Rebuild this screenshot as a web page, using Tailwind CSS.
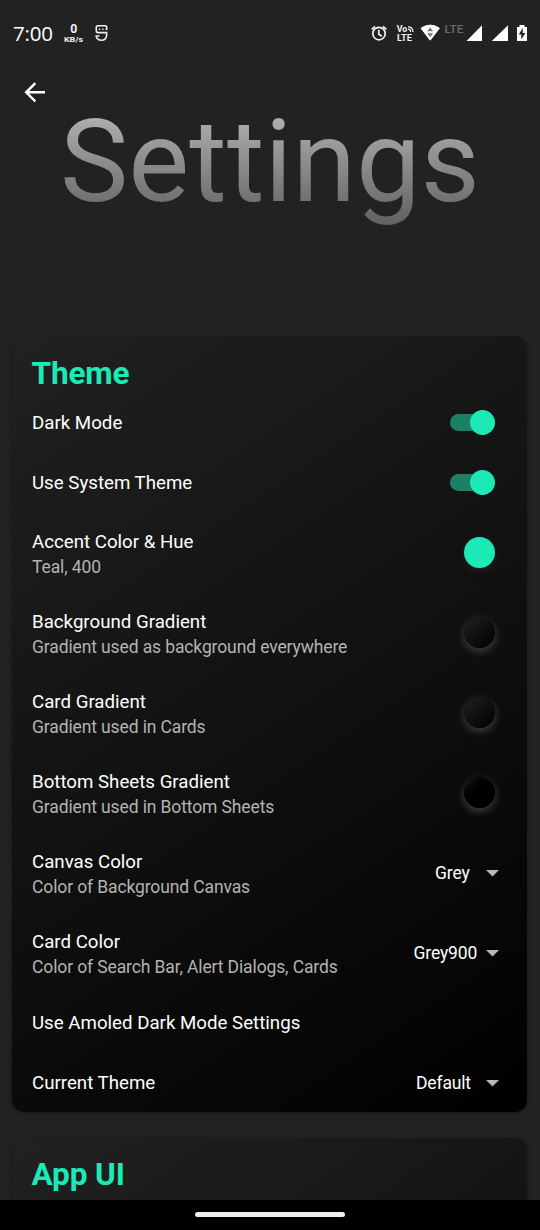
<!DOCTYPE html>
<html lang="en">
<head>
<meta charset="utf-8">
<title>Settings</title>
<script src="https://cdn.jsdelivr.net/npm/@tailwindcss/browser@4"></script>
</head>
<body class="bg-[#222222]">
<div class="w-[540px] h-[1230px] overflow-hidden flex flex-col bg-[#222222] text-white font-['Roboto',sans-serif]">
  <!-- Status bar -->
  <header class="h-[66px] shrink-0 flex items-center justify-between pl-[13px] pr-[12px]">
    <div class="flex items-center">
      <span class="w-[50px] text-[20.5px] leading-6 font-['Open_Sans',sans-serif] tracking-[-0.2px] whitespace-nowrap">7:00</span>
      <svg width="22" height="26" viewBox="0 -2 22 26" fill="#f4f4f4" font-family="Roboto" font-weight="700"><text x="7.2" y="10.8" font-size="12.5" textLength="7" lengthAdjust="spacingAndGlyphs">0</text><text x="1" y="20" font-size="7.6" textLength="19" lengthAdjust="spacingAndGlyphs">KB/s</text></svg>
      <svg class="ml-[10px]" width="13" height="18" viewBox="0 0 13 18" fill="none" stroke="#eee" stroke-width="1.6"><path d="M12.5 5.2H10.6M11.7 5.4V3.4Q11.7 1.8 9.9 1.8H3.1Q1.3 1.8 1.3 3.4V6.8Q1.3 8.6 3 8.6H11.6V11.6Q11 16.2 6.5 16.2Q2 16.2 1.3 12.4"/><path d="M3.8 5.2h1.4M7.2 5.2h1.4M.4 12H4.5"/></svg>
    </div>
    <svg width="159" height="24" viewBox="369 21 159 24" fill="none">
      <g stroke="#f2f2f2" stroke-width="1.7"><circle cx="379" cy="33.6" r="6.2"/><path d="M378.8 29.8v4.4l3 2M371.6 29.4l3.5-3M386.4 29.4l-3.5-3"/></g>
      <g fill="#f2f2f2" font-family="Roboto" font-weight="700" font-size="9"><text x="396.8" y="32" textLength="10.5" lengthAdjust="spacingAndGlyphs">Vo</text><text x="397" y="41" textLength="15" lengthAdjust="spacingAndGlyphs">LTE</text></g>
      <path d="M408 29.2q2.7 0 2.7 2.8M408 26.8q5 0 5 5.2" stroke="#f2f2f2" stroke-width="1.2"/>
      <path d="M421 28.2Q430.2 22 439.4 28.2L430.2 40.2Z" fill="#fff" stroke="#fff" stroke-linejoin="round"/>
      <path d="M427.2 31.2l3-3.8 3 3.8zM427.2 33.2l3 4 3-4z" fill="#777"/>
      <text x="444.5" y="33" fill="#6c6c6c" font-family="Roboto" font-weight="500" font-size="11" textLength="19" lengthAdjust="spacingAndGlyphs">LTE</text>
      <path d="M466.5 41L482 25.2V41ZM491.8 41L508 25.2V41Z" fill="#fff"/>
      <path d="M519.5 25h5v2h2.5v14h-10V27h2.5z" fill="#fff"/>
      <path d="M522.8 27.8l-4 6.8h2.5v5l4-6.7h-2.5z" fill="#222"/>
    </svg>
  </header>
  <!-- Title area -->
  <section class="h-[270px] shrink-0">
    <div class="h-[52px] pl-[23px] flex items-center"><svg width="24" height="24" viewBox="0 0 24 24" fill="none" stroke="#fff" stroke-width="2.5"><path d="M22 12.3H3.6M12.3 3.2L3.2 12.3L12.3 21.4"/></svg></div>
    <h1 class="-mt-[24px] h-[135px] leading-[135px] text-[115px] text-center whitespace-nowrap bg-linear-to-b from-[#c0c0c0] to-[#5e5e5e] bg-clip-text text-transparent">Settings</h1>
  </section>
  <main class="h-[864px] shrink-0 overflow-hidden pl-[12px] pr-[13px] flex flex-col gap-[26px]">
    <section class="h-[776px] shrink-0 rounded-[12px] bg-[linear-gradient(146.4deg,#212121,#000000)] shadow-[0_1px_4px_rgba(0,0,0,0.35)] px-[20px]">
      <h2 class="h-[56px] pt-[19px] -ml-[0.5px] leading-[38px] text-[31.5px] tracking-[-0.1px] font-bold text-[#1de9b6]">Theme</h2>
      <div class="h-[60px] flex items-center justify-between"><span class="pt-[2px] text-[18.7px]">Dark Mode</span>
        <span class="mr-[12px] w-[45px] h-[25px] flex items-center"><i class="w-[34px] h-[17px] rounded-full bg-[#1b8066]"></i><i class="-ml-[14px] size-[25px] shrink-0 rounded-full bg-[#1de9b6]"></i></span></div>
      <div class="h-[60px] flex items-center justify-between"><span class="pt-[2px] text-[18.7px]">Use System Theme</span>
        <span class="mr-[12px] w-[45px] h-[25px] flex items-center"><i class="w-[34px] h-[17px] rounded-full bg-[#1b8066]"></i><i class="-ml-[14px] size-[25px] shrink-0 rounded-full bg-[#1de9b6]"></i></span></div>
      <div class="h-[80px] flex items-center justify-between"><div class="pt-[5px] leading-[25px]"><p class="text-[18.7px]">Accent Color &amp; Hue</p><p class="text-[17.5px] tracking-[-0.12px] text-[#b3b3b3]">Teal, 400</p></div><i class="mt-px mr-[12px] size-[31.5px] rounded-full bg-[#1de9b6] shadow-[0_4px_7px_rgba(60,60,60,0.3)]"></i></div>
      <div class="h-[80px] flex items-center justify-between"><div class="pt-[5px] leading-[25px]"><p class="text-[18.7px]">Background Gradient</p><p class="text-[17.5px] tracking-[-0.12px] text-[#b3b3b3]">Gradient used as background everywhere</p></div><i class="mt-px mr-[12px] size-[31.5px] rounded-full bg-linear-to-br from-[#212121] to-[#030303] shadow-[0_3px_8px_#444444]"></i></div>
      <div class="h-[80px] flex items-center justify-between"><div class="pt-[5px] leading-[25px]"><p class="text-[18.7px]">Card Gradient</p><p class="text-[17.5px] tracking-[-0.12px] text-[#b3b3b3]">Gradient used in Cards</p></div><i class="mt-px mr-[12px] size-[31.5px] rounded-full bg-linear-to-br from-[#212121] to-[#030303] shadow-[0_3px_8px_#444444]"></i></div>
      <div class="h-[80px] flex items-center justify-between"><div class="pt-[5px] leading-[25px]"><p class="text-[18.7px]">Bottom Sheets Gradient</p><p class="text-[17.5px] tracking-[-0.12px] text-[#b3b3b3]">Gradient used in Bottom Sheets</p></div><i class="mt-px mr-[12px] size-[31.5px] rounded-full bg-linear-to-br from-[#212121] to-black to-55% shadow-[0_3px_8px_#444444]"></i></div>
      <div class="h-[80px] flex items-center justify-between"><div class="pt-[5px] leading-[25px]"><p class="text-[18.7px]">Canvas Color</p><p class="text-[17.5px] tracking-[-0.12px] text-[#b3b3b3]">Color of Background Canvas</p></div>
        <div class="mr-[8px] pt-[2px] flex items-center text-[17.5px] tracking-[-0.15px]"><span class="w-[51px]">Grey</span><svg width="13" height="7" viewBox="0 0 13 7"><path d="M0 0h13L6.5 6.5z" fill="#b8b8b8"/></svg></div></div>
      <div class="h-[80px] flex items-center justify-between"><div class="pt-[5px] leading-[25px]"><p class="text-[18.7px]">Card Color</p><p class="text-[17.5px] tracking-[-0.12px] text-[#b3b3b3]">Color of Search Bar, Alert Dialogs, Cards</p></div>
        <div class="mr-[8px] pt-[2px] flex items-center text-[17.5px] tracking-[-0.15px]"><span class="w-[72.5px]">Grey900</span><svg width="13" height="7" viewBox="0 0 13 7"><path d="M0 0h13L6.5 6.5z" fill="#b8b8b8"/></svg></div></div>
      <div class="h-[60px] pt-[2px] flex items-center text-[18.7px]">Use Amoled Dark Mode Settings</div>
      <div class="h-[60px] flex items-center justify-between"><span class="pt-[2px] text-[18.7px]">Current Theme</span>
        <div class="mr-[8px] pt-[2px] flex items-center text-[17.5px] tracking-[-0.15px]"><span class="w-[70px]">Default</span><svg width="13" height="7" viewBox="0 0 13 7"><path d="M0 0h13L6.5 6.5z" fill="#b8b8b8"/></svg></div></div>
    </section>
    <section class="h-[720px] shrink-0 rounded-[12px] bg-[linear-gradient(145deg,#212121,#000000)] shadow-[0_1px_4px_rgba(0,0,0,0.35)] px-[20px]">
      <h2 class="h-[56px] pt-[18px] -ml-[0.5px] leading-[38px] text-[31.5px] tracking-[-0.1px] font-bold text-[#1de9b6]">App UI</h2>
    </section>
  </main>
  <footer class="h-[30px] shrink-0 bg-black flex justify-center pt-[12px]"><i class="w-[150px] h-[5px] rounded-full bg-[#eeeeee]"></i></footer>
</div>
</body>
</html>
